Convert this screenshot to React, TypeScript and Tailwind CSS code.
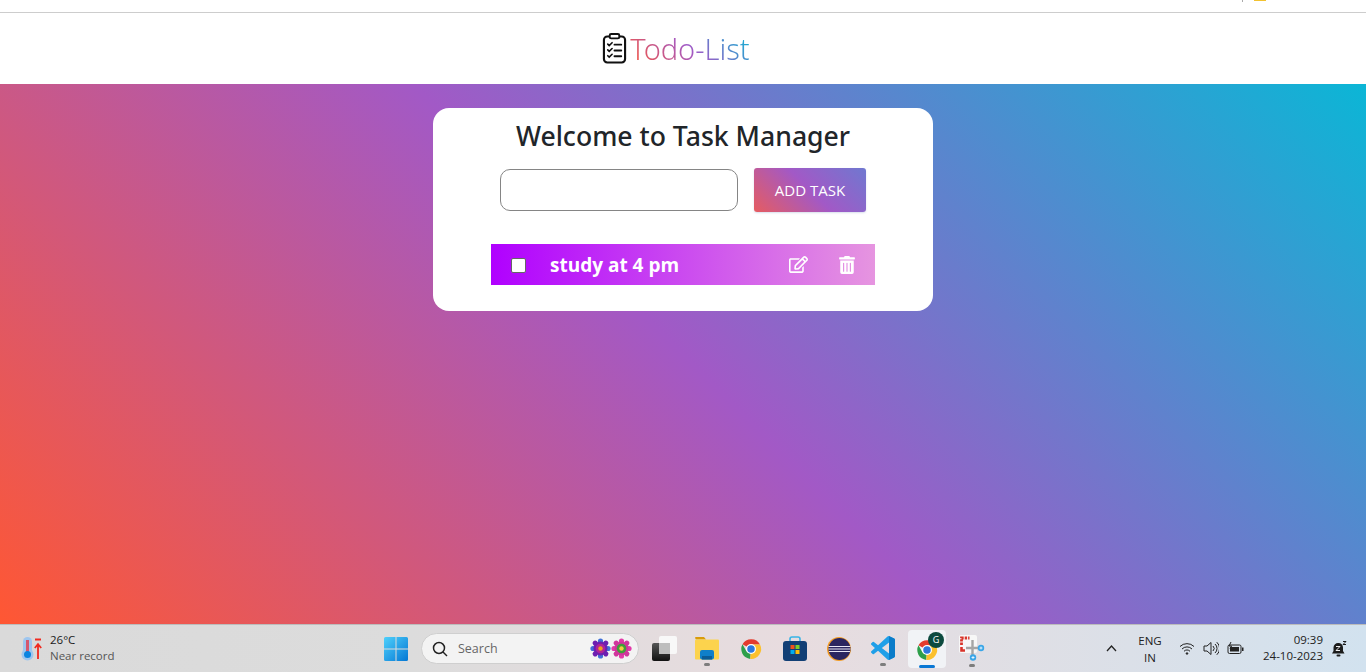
import { FaRegEdit, FaTrashAlt } from 'react-icons/fa';

function ClipboardIcon() {
  return (
    <svg width="25" height="33" viewBox="0 0 26 34" fill="none" stroke="#111" strokeLinecap="round">
      <rect x="2" y="4.5" width="22" height="27" rx="3.5" strokeWidth="2.2" />
      <rect x="8" y="2" width="10" height="4.5" rx="1.5" fill="#fff" strokeWidth="2" />
      <path d="M6 12.5l1.500 1.500 3-3M6 18.500l1.500 1.500 3-3M6 24.500l1.500 1.500 3-3" strokeWidth="1.700" />
      <path d="M13 13h7M13 19h7M13 25h7" strokeWidth="2" />
    </svg>
  );
}

function Thermometer() {
  return (
    <svg width="22" height="26" viewBox="0 0 22 26" fill="none">
      <rect x="3" y="1" width="9" height="18" rx="4.500" fill="#9ec6ef" />
      <circle cx="7.500" cy="18.500" r="6" fill="#9ec6ef" />
      <rect x="6" y="4" width="3" height="13" fill="#d4566e" />
      <circle cx="7.500" cy="18.500" r="3.500" fill="#0a84e0" />
      <path d="M15 3.500h6" stroke="#f02a20" strokeWidth="2" />
      <path d="M18 23V9M14.800 12l3.200-3.800 3.200 3.800" stroke="#f02a20" strokeWidth="1.800" />
    </svg>
  );
}

function WindowsLogo() {
  return (
    <svg width="24" height="24" viewBox="0 0 24 24">
      <defs>
        <linearGradient id="win" x1="0" y1="0" x2="1" y2="1">
          <stop offset="0" stopColor="#4fd0fb" />
          <stop offset="1" stopColor="#0377d4" />
        </linearGradient>
      </defs>
      <path d="M0 1.500A1.500 1.500 0 011.500 0h10v11.500H0zM12.500 0h10A1.500 1.500 0 0124 1.500v10H12.500zM0 12.500h11.500V24h-10A1.500 1.500 0 010 22.500zM12.500 12.500H24v10a1.500 1.500 0 01-1.500 1.500h-10z" fill="url(#win)" />
    </svg>
  );
}

function Flower({ tips, outer, mid, inner }: { tips: string; outer: string; mid: string; inner: string }) {
  return (
    <svg width="21" height="21" viewBox="0 0 21 21">
      {[0, 45, 90, 135, 180, 225, 270, 315].map((a) => (
        <circle key={a} cx="10.500" cy="3" r="2.600" fill={a % 90 === 0 ? tips : outer} transform={`rotate(${a} 10.500 10.500)`} />
      ))}
      <circle cx="10.500" cy="10.500" r="7" fill={outer} />
      <circle cx="10.500" cy="10.500" r="4.800" fill={mid} />
      <circle cx="10.500" cy="10.500" r="2.200" fill={inner} />
    </svg>
  );
}

function TaskView() {
  return (
    <svg width="25" height="25" viewBox="0 0 25 25">
      <defs>
        <linearGradient id="tv" x1="0" y1="0" x2="0" y2="1">
          <stop offset="0" stopColor="#555" />
          <stop offset="1" stopColor="#111" />
        </linearGradient>
      </defs>
      <rect x="7" y="0" width="18" height="18" rx="2" fill="#f8f8f8" />
      <rect x="0" y="7" width="18" height="18" rx="2" fill="url(#tv)" />
      <rect x="7" y="7" width="11" height="11" fill="#bdbdbd" />
    </svg>
  );
}

function Explorer() {
  return (
    <svg width="24" height="24" viewBox="0 0 24 24">
      <path d="M0 2a1 1 0 011-1h8l2 2.500H1z" fill="#d99c09" />
      <rect x="0" y="3.500" width="24" height="20" rx="1" fill="#fcd34d" />
      <rect x="5" y="14" width="14" height="9.500" rx="2" fill="#0f7fc9" />
      <rect x="7" y="20" width="10" height="3.500" fill="#0b5c96" />
    </svg>
  );
}

function Chrome() {
  return (
    <svg width="24" height="24" viewBox="0 0 48 48">
      <path d="M24 24L7 14.500A20 20 0 0142 15H24z" fill="#e33b2e" />
      <path d="M24 24l-9 5L7 14.500A20 20 0 0022.500 44z" fill="#2d9f4a" />
      <path d="M24 24V15h18a20 20 0 01-19.500 29z" fill="#fbc02d" />
      <circle cx="24" cy="24" r="10" fill="#fff" />
      <circle cx="24" cy="24" r="7.500" fill="#2c78dc" />
    </svg>
  );
}

function Store() {
  return (
    <svg width="24" height="25" viewBox="0 0 24 25" fill="none">
      <path d="M7 6V3a2 2 0 012-2h6a2 2 0 012 2v3" stroke="#39b4e6" strokeWidth="1.600" />
      <rect x="0" y="5" width="24" height="20" rx="3" fill="#123f75" />
      <rect x="7.500" y="9" width="4" height="4" fill="#f1511b" />
      <rect x="12.500" y="9" width="4" height="4" fill="#80cc28" />
      <rect x="7.500" y="14" width="4" height="4" fill="#00adef" />
      <rect x="12.500" y="14" width="4" height="4" fill="#fbbc09" />
    </svg>
  );
}

function Eclipse() {
  return (
    <svg width="24" height="24" viewBox="0 0 24 24">
      <circle cx="12" cy="12" r="12" fill="#f39c24" />
      <circle cx="12.500" cy="12" r="11" fill="#2b2660" />
      <path d="M1.500 9.500h22M1.500 12h22M2 14.500h21" stroke="#e8e6f4" strokeWidth="1.200" />
    </svg>
  );
}

function VsCode() {
  return (
    <svg width="24" height="24" viewBox="0 0 24 24">
      <path
        d="M23.150 2.587L18.210.21a1.494 1.494 0 0 0-1.705.29l-9.460 8.630-4.120-3.128a.999.999 0 0 0-1.276.057L.327 7.261A1 1 0 0 0 .326 8.740L3.899 12 .326 15.260a1 1 0 0 0 .001 1.479L1.650 17.940a.999.999 0 0 0 1.276.057l4.120-3.128 9.460 8.630a1.492 1.492 0 0 0 1.704.29l4.942-2.377A1.500 1.500 0 0 0 24 20.060V3.939a1.500 1.500 0 0 0-.850-1.352zm-5.146 14.861L10.826 12l7.178-5.448v10.896z"
        fill="#1f9fe8"
      />
      <path d="M18.004 0.100l5.146 2.487A1.500 1.500 0 0 1 24 3.939V20.060a1.500 1.500 0 0 1-.850 1.352l-5.146 2.480z" fill="#0b7cc9" />
    </svg>
  );
}

function Snip() {
  return (
    <svg width="26" height="26" viewBox="0 0 26 26" fill="none">
      <rect x="0" y="0" width="18" height="18" rx="2" fill="#f7f7f7" />
      <path d="M2.500 10V3h8" stroke="#d9342b" strokeWidth="2.800" strokeDasharray="2.400 1" />
      <path d="M2.500 12v3.500h3.500" stroke="#d9342b" strokeWidth="2.600" />
      <path d="M13.500 5v15M7 13h14" stroke="#a5a5a5" strokeWidth="2.400" />
      <circle cx="22" cy="13" r="3.200" fill="#3aa6e8" />
      <path d="M20.500 13h3M22 11.500v3" stroke="#fff" strokeWidth="0.800" />
      <circle cx="14" cy="22.500" r="3.200" fill="#3aa6e8" />
      <path d="M12.500 22.500h3M14 21v3" stroke="#fff" strokeWidth="0.800" />
    </svg>
  );
}

function Tray() {
  return (
    <div className="flex items-center">
      <svg width="16" height="13" viewBox="0 0 16 13" fill="none" stroke="#222" strokeWidth="1">
        <path d="M1 4.500a10 10 0 0114 0M3 7a7 7 0 0110 0M5 9.300a4 4 0 016 0" />
        <circle cx="8" cy="11.500" r="0.800" fill="#222" />
      </svg>
      <svg className="ml-[8px]" width="16" height="15" viewBox="0 0 16 15" fill="none" stroke="#222" strokeWidth="1">
        <path d="M1 5h3l4-3.500v12L4 10H1zM10 5a3.500 3.500 0 010 5M12 3a6 6 0 010 9M13.800 1.200a8.500 8.500 0 010 12.600" />
      </svg>
      <svg className="ml-[8px]" width="17" height="13" viewBox="0 0 17 13" fill="none">
        <rect x="1" y="3" width="13" height="8.500" rx="1.500" stroke="#222" />
        <rect x="3" y="5" width="9" height="4.500" fill="#222" />
        <rect x="15" y="5.500" width="1.500" height="3.500" fill="#222" />
        <path d="M4 0L2 4h2.500L3 7" stroke="#222" />
      </svg>
    </div>
  );
}

function Bell() {
  return (
    <svg width="15" height="16" viewBox="0 0 15 16">
      <path d="M6.500 2a4.500 4.500 0 014.500 4.500V10l1.500 2.500H0L1.500 10V6.500A4.500 4.500 0 016.500 2z" fill="#1b1b1b" />
      <rect x="4.500" y="13.500" width="4" height="2" rx="1" fill="#1b1b1b" />
      <path d="M4 5.500h4L4 9.500h4" stroke="#eee" strokeWidth="1" fill="none" />
      <path d="M11 0.500h3l-3 3h3" stroke="#1b1b1b" strokeWidth="1" fill="none" />
    </svg>
  );
}

function Dot() {
  return <span className="mt-[3px] block h-[3px] w-[6px] rounded-full bg-[#7d7d7d]" />;
}

function App() {
  return (
    <div className="flex h-[672px] w-full flex-col overflow-hidden bg-white font-['Open_Sans','Noto_Sans',sans-serif]">
      <div className="flex h-[13px] items-start border-b border-[#cdcdcd] pl-[1242px]">
        <span className="h-[2px] w-px bg-[#aaa]" />
        <span className="ml-[11px] h-px w-[12px] bg-[#f2c230]" />
      </div>
      <header className="flex h-[71px] items-center justify-center pr-[14px]">
        <ClipboardIcon />
        <h1 className="ml-[3px] bg-[linear-gradient(45deg,#ff5733,#a259c6,#00bcd4)] bg-clip-text font-['Noto_Sans',sans-serif] text-[29px] font-light leading-[38px] text-transparent">
          Todo-List
        </h1>
      </header>

      <main className="h-[540px] bg-[linear-gradient(45deg,#ff5733,#a259c6,#0bb6d6)] pt-[24px]">
        <div className="mx-auto flex h-[203px] w-[500px] flex-col items-center rounded-[16px] bg-white pt-[8px]">
          <h2 className="font-['Noto_Sans',sans-serif] text-[26.600px] font-medium leading-[40px] text-[#212529]">Welcome to Task Manager</h2>
          <div className="mt-[12px] flex items-center">
            <input className="h-[42px] w-[238px] rounded-[10px] border border-[#858585] bg-white" />
            <button className="ml-[16px] h-[44px] w-[112px] rounded-[3px] bg-[linear-gradient(45deg,#e65c60,#a259c6,#6f78d0)] text-[15px] text-white shadow-[0_1px_2px_rgba(60,90,160,0.2)]">
              ADD TASK
            </button>
          </div>
          <div className="mt-[32px] flex h-[41px] w-[384px] items-center bg-[linear-gradient(90deg,#b000ff,#e695e0)] pl-[20px]">
            <span className="mt-[2px] h-[15px] w-[15px] rounded-[2px] border border-[#666] bg-white" />
            <span className="ml-[24px] mt-[2px] w-[239px] text-[19px] font-bold text-white">study at 4 pm</span>
            <FaRegEdit className="text-[19px] text-white" />
            <FaTrashAlt className="ml-[30px] text-[18px] text-white" />
          </div>
        </div>
      </main>

      <footer className="flex h-[48px] items-center border-t border-[#bcbcbc] bg-[linear-gradient(90deg,#dadada,#dcdcdc_30%,#e8dcdf_58%,#dfdfe5_75%,#d2e2ef)] text-[#222]">
        <div className="ml-[20px] w-[22px]">
          <Thermometer />
        </div>
        <div className="mb-[2px] ml-[8px] w-[100px] text-[11.500px] leading-[16px]">
          <div className="text-[#1a1a1a]">26°C</div>
          <div className="text-[#555]">Near record</div>
        </div>
        <div className="ml-[234px]">
          <WindowsLogo />
        </div>
        <div className="ml-[13px] flex h-[31px] w-[218px] items-center rounded-full border border-[#cfcfcf] bg-[#f3f3f3] pl-[10px]">
          <svg width="16" height="16" viewBox="0 0 16 16" fill="none" stroke="#222" strokeWidth="1.500">
            <circle cx="7" cy="7" r="5.500" />
            <path d="M11 11l4 4" />
          </svg>
          <span className="ml-[10px] mt-[2px] w-[132px] text-[12.500px] text-[#666]">Search</span>
          <Flower tips="#3f6fd8" outer="#6d1fb0" mid="#b0229a" inner="#f0a020" />
          <Flower tips="#e23aa8" outer="#d0369c" mid="#3e9e3a" inner="#f2d040" />
        </div>
        <div className="ml-[13px]">
          <TaskView />
        </div>
        <div className="ml-[18px] flex w-[24px] flex-col items-center pt-[5px]">
          <Explorer />
          <Dot />
        </div>
        <div className="ml-[20px]">
          <Chrome />
        </div>
        <div className="ml-[20px]">
          <Store />
        </div>
        <div className="ml-[20px]">
          <Eclipse />
        </div>
        <div className="ml-[20px] flex w-[24px] flex-col items-center pt-[5px]">
          <VsCode />
          <Dot />
        </div>
        <div className="relative ml-[13px] flex h-[38px] w-[38px] flex-col items-center rounded-[4px] bg-[#f1f3f6] pt-[8px]">
          <Chrome />
          <span className="absolute right-[2px] top-[2px] flex h-[16px] w-[16px] items-center justify-center rounded-full bg-[#0c4a3e] text-[9px] text-white">
            G
          </span>
          <span className="absolute bottom-[0px] h-[3px] w-[16px] rounded-full bg-[#0a78d4]" />
        </div>
        <div className="ml-[13px] flex w-[26px] flex-col items-center pt-[5px]">
          <Snip />
          <Dot />
        </div>
        <svg className="ml-[121px]" width="11" height="7" viewBox="0 0 11 7" fill="none" stroke="#222" strokeWidth="1.300">
          <path d="M1 6l4.500-5L10 6" />
        </svg>
        <div className="ml-[18px] w-[30px] text-center text-[11.500px] leading-[17px]">
          <div>ENG</div>
          <div>IN</div>
        </div>
        <div className="ml-[14px]">
          <Tray />
        </div>
        <div className="mb-[2px] ml-[15px] w-[64px] text-right text-[11.500px] leading-[16px]">
          <div>09:39</div>
          <div>24-10-2023</div>
        </div>
        <div className="ml-[9px]">
          <Bell />
        </div>
      </footer>
    </div>
  );
}

export default App;
